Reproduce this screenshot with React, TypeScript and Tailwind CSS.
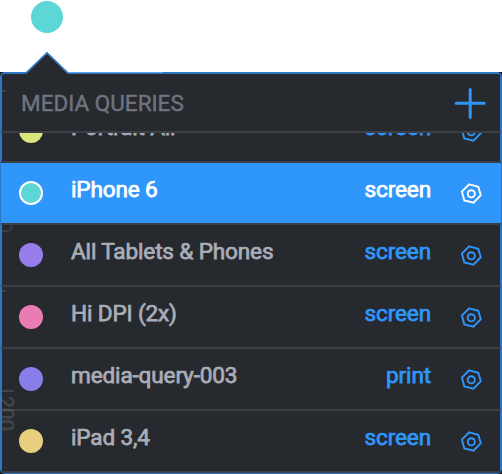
type Query = { name: string; type: string; color: string; selected?: boolean };

const queries: Query[] = [
  { name: "Portrait All", type: "screen", color: "bg-[#d9e77c]" },
  { name: "iPhone 6", type: "screen", color: "bg-[#5cd6d6]", selected: true },
  { name: "All Tablets & Phones", type: "screen", color: "bg-[#967eea]" },
  { name: "Hi DPI (2x)", type: "screen", color: "bg-[#e97db3]" },
  { name: "media-query-003", type: "print", color: "bg-[#877eea]" },
  { name: "iPad 3,4", type: "screen", color: "bg-[#e8cf7e]" },
];

function NutIcon() {
  return (
    <svg className="mt-[19px] ml-7 size-6 shrink-0" viewBox="0 0 24 24" fill="none" stroke="currentColor" strokeWidth="1.9">
      <path d="M10.2 2.3 19.3 4.8 21.8 13.2 14.5 20.7 5.3 18.5 2.9 9.5Z" />
      <circle cx="12.3" cy="11.8" r="3.6" />
    </svg>
  );
}

function Row({ name, type, color, selected }: Query) {
  return (
    <li className="h-[62px] shrink-0 border-b-2 border-[#3c3f45]">
      <div className={`flex h-[60px] items-start border-x pr-4 pl-[17px] ${selected ? "border-[#2f96fc] bg-[#2f96fc] text-white" : "border-[#2c77c4] text-[#a9adb8]"}`}>
        <span className={`mt-[18px] size-6 shrink-0 rounded-full ${color} ${selected ? "border-2 border-white" : ""}`} />
        <span className="mt-3 ml-7 flex-1 whitespace-nowrap leading-[30px]">{name}</span>
        <span className={`mt-3 leading-[30px] ${selected ? "" : "text-[#2f96fc]"}`}>{type}</span>
        <span className={`mr-px ${selected ? "" : "text-[#2f96fc]"}`}><NutIcon /></span>
      </div>
    </li>
  );
}

export default function App() {
  return (
    <div className="relative h-[474px] w-[502px] overflow-hidden bg-white pt-[1px] font-['Roboto',sans-serif] text-[22.6px] font-normal tracking-[-0.16px] [-webkit-text-stroke:0.75px_currentColor]">
      <div className="ml-[31px] size-8 rounded-full bg-[#5cd6d6]" />
      <div className="mt-[39px] h-[402px] bg-[#17191c]">
        <section className="flex h-[402px] flex-col overflow-hidden rounded-[5px] border border-t-2 border-[#2c77c4] bg-[#26292e]">
          <header className="h-[59px] shrink-0 border-b-2 border-[#3c3f45]">
            <div className="flex h-[57px] items-center justify-between border-x border-[#2c77c4] pr-[14px] pl-[19px]">
              <h1 className="pt-0.5 text-[22.5px] tracking-normal text-[#70747f] [-webkit-text-stroke:0.4px_currentColor]">MEDIA QUERIES</h1>
              <svg className="size-8" viewBox="0 0 32 32" stroke="#2f96fc" strokeWidth="3" strokeLinecap="round">
                <path d="M16.2 2.5v28M2.2 16.2h28" />
              </svg>
            </div>
          </header>
          <ul className="flex min-h-0 flex-1 flex-col justify-end overflow-hidden">
            {queries.map((q) => <Row key={q.name} {...q} />)}
          </ul>
        </section>
      </div>
      <div className="absolute top-[72px] left-[68px] h-px w-[95px] bg-[#5fa3e4]" />
      <svg className="absolute top-[51px] left-[25px] h-[24px] w-[44px]" viewBox="0 0 44 24">
        <path d="M1 23 22 2 43 23V24H1Z" fill="#26292e" />
        <path d="M1 22 22 2 43 22" fill="none" stroke="#2c77c4" strokeWidth="1.7" />
      </svg>
      <div className="absolute top-[90px] left-0 h-[2px] w-1.5 bg-[#6b7078]/30" />
      <div className="absolute top-[290px] left-0 h-[2px] w-1.5 bg-[#6b7078]/30" />
      <div className="absolute top-[390px] left-0 h-[2px] w-3.5 bg-[#6b7078]/40" />
      <span className="absolute top-[396px] -left-[5px] text-[21px] leading-[22px] text-[#6b7078]/35 [writing-mode:vertical-rl]">200</span>
      <div className="absolute top-[225px] left-0 h-[7px] w-[13px] rounded-br-md border-r-2 border-b-2 border-[#6b7078]/30" />
    </div>
  );
}
